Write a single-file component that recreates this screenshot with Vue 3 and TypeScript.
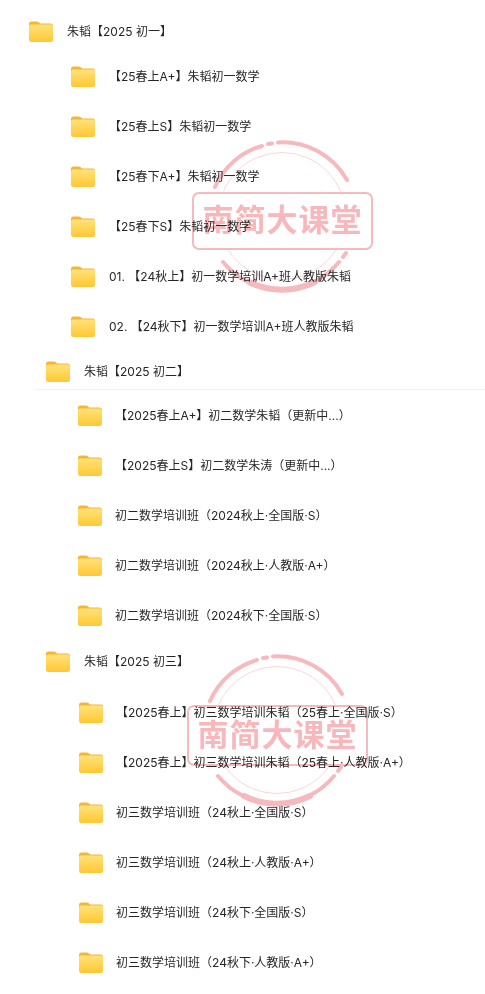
<script setup lang="ts">
interface Row { text: string; top?: boolean }
interface Section { cls: string; rows: Row[] }

const sections: Section[] = [
  {
    cls: 'one',
    rows: [
      { text: '朱韬【2025 初一】', top: true },
      { text: '【25春上A+】朱韬初一数学' },
      { text: '【25春上S】朱韬初一数学' },
      { text: '【25春下A+】朱韬初一数学' },
      { text: '【25春下S】朱韬初一数学' },
      { text: '01. 【24秋上】初一数学培训A+班人教版朱韬' },
      { text: '02. 【24秋下】初一数学培训A+班人教版朱韬' },
    ],
  },
  {
    cls: 'two',
    rows: [
      { text: '朱韬【2025 初二】', top: true },
      { text: '【2025春上A+】初二数学朱韬（更新中...）' },
      { text: '【2025春上S】初二数学朱涛（更新中...）' },
      { text: '初二数学培训班（2024秋上·全国版·S）' },
      { text: '初二数学培训班（2024秋上·人教版·A+）' },
      { text: '初二数学培训班（2024秋下·全国版·S）' },
    ],
  },
  {
    cls: 'three',
    rows: [
      { text: '朱韬【2025 初三】', top: true },
      { text: '【2025春上】初三数学培训朱韬（25春上·全国版·S）' },
      { text: '【2025春上】初三数学培训朱韬（25春上·人教版·A+）' },
      { text: '初三数学培训班（24秋上·全国版·S）' },
      { text: '初三数学培训班（24秋上·人教版·A+）' },
      { text: '初三数学培训班（24秋下·全国版·S）' },
      { text: '初三数学培训班（24秋下·人教版·A+）' },
    ],
  },
]

const stamps = ['stamp-a', 'stamp-b']
</script>

<template>
  <div class="page">
    <svg class="defs" aria-hidden="true">
      <defs>
        <linearGradient id="folderFill" x1="0" y1="0" x2="0" y2="1">
          <stop offset="0" stop-color="#ffe27a" />
          <stop offset="1" stop-color="#ffc832" />
        </linearGradient>
      </defs>
    </svg>
    <section v-for="s in sections" :key="s.cls" class="section" :class="s.cls">
      <div v-for="r in s.rows" :key="r.text" class="row" :class="{ top: r.top }">
        <svg class="folder" viewBox="0 0 24 21" aria-hidden="true">
          <path d="M0 3a2.5 2.5 0 0 1 2.5-2.500h5.200c1 0 1.700.4 2.400 1l1.200 1h10.200A2.500 2.500 0 0 1 24 5v4H0z" fill="#f7b632" />
          <rect y="3.600" width="24" height="17.400" rx="2.200" fill="url(#folderFill)" />
        </svg>
        <span class="label">{{ r.text }}</span>
      </div>
    </section>

    <div v-for="st in stamps" :key="st" class="stamp" :class="st" aria-hidden="true">
      <svg class="rings" viewBox="0 0 190 160">
        <circle cx="95" cy="80" r="63.500" class="thin" />
        <path d="M28 51A73 73 0 0 1 75 10" class="thick" />
        <path d="M81 8A73 73 0 0 1 85 7.500" class="thick" />
        <path d="M91 6.500A74 74 0 0 1 160 44" class="thick" />
        <path d="M36 126A75 75 0 0 0 152 126" class="thick" />
        <path d="M62 146A75 75 0 0 0 128 146" class="heavy" />
        <path d="M156 121L159 117" class="thick" />
      </svg>
      <div class="plate">南简大课堂</div>
    </div>
  </div>
</template>

<style>
html, body { margin: 0; background: #fff; }
</style>

<style scoped>
.page {
  position: relative;
  width: 485px;
  height: 994px;
  overflow: hidden;
  background: #fff;
  font-family: Inter, "Noto Sans CJK SC", sans-serif;
  font-size: 12px;
  color: #262626;
}
.defs { position: absolute; width: 0; height: 0; }
.section { display: flex; flex-direction: column; }
.row {
  display: flex;
  align-items: center;
  box-sizing: border-box;
  height: 50px;
}
.folder { width: 24px; height: 21px; flex: none; }
.label { white-space: pre; line-height: 16px; padding-top: 2px; }

.one { padding-top: 11px; }
.one .row { padding-left: 71px; gap: 14px; }
.one .row.top { padding-left: 29px; height: 40px; }

.two .row { padding-left: 78px; gap: 13px; }
.two .row.top {
  height: 39px;
  margin-left: 36px;
  padding: 2px 0 0 10px;
  gap: 14px;
  border-bottom: 1px solid #f2f2f2;
}

.three .row { padding-left: 79px; gap: 13px; }
.three .row.top { padding-left: 46px; gap: 14px; height: 42px; margin-bottom: 5px; }

.stamp {
  position: absolute;
  width: 190px;
  height: 160px;
  mix-blend-mode: multiply;
  pointer-events: none;
}
.stamp-a { left: 187px; top: 136px; }
.stamp-b { left: 182px; top: 650px; }
.rings { position: absolute; inset: 0; width: 190px; height: 160px; }
.thick { fill: none; stroke: #f6b9bd; stroke-width: 4; stroke-linecap: round; }
.heavy { fill: none; stroke: #f6b9bd; stroke-width: 6; stroke-linecap: round; }
.thin { fill: none; stroke: #fad6d8; stroke-width: 1; }
.plate {
  position: absolute;
  left: 5px;
  top: 56px;
  width: 181px;
  height: 58px;
  box-sizing: border-box;
  border: 2.500px solid #f6b9bd;
  border-radius: 7px;
  background: #fff;
  color: #f7b7bb;
  font-family: "Noto Sans CJK SC", sans-serif;
  font-size: 31px;
  font-weight: 700;
  line-height: 47px;
  letter-spacing: 1px;
  text-align: center;
}
.stamp-b .plate { top: 55px; height: 61px; line-height: 51px; }
</style>
